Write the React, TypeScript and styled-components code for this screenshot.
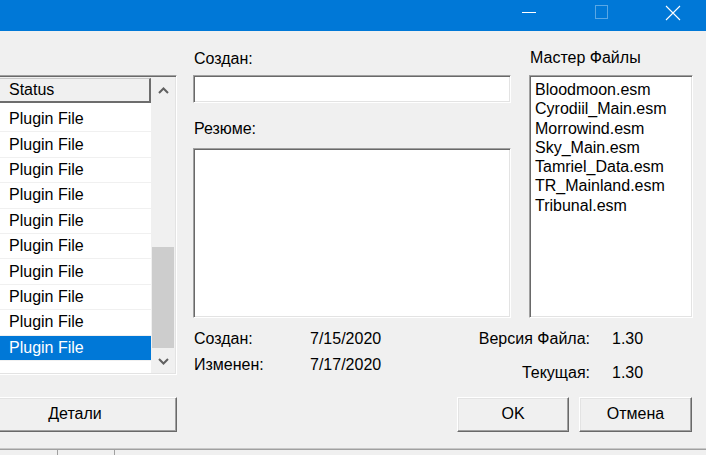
import React from "react";
import styled, { createGlobalStyle } from "styled-components";

const Global = createGlobalStyle`
  html, body { margin: 0; padding: 0; }
  body {
    width: 706px; height: 455px; overflow: hidden;
    background: #f0f0f0;
    font-family: "Liberation Sans", Arial, sans-serif;
    font-size: 16px; color: #000;
  }
`;

const Window = styled.div`
  width: 706px; height: 455px;
  display: flex; flex-direction: column;
  background: #f0f0f0; overflow: hidden;
`;

const TitleBar = styled.div`
  height: 31px; flex-shrink: 0;
  background: #0078d7;
  display: flex; justify-content: flex-end;
`;

const CaptionGroup = styled.div`
  display: flex; margin-right: -3px;
`;

const CaptionButton = styled.div<{ $dim?: boolean }>`
  width: 72px; display: flex; justify-content: center;
  padding-top: 5px; box-sizing: border-box;
  opacity: ${(p) => (p.$dim ? 0.35 : 1)};
`;

const Body = styled.div`
  flex: 1; display: flex;
`;

const LeftColumn = styled.div`
  width: 177px; flex-shrink: 0;
  display: flex; flex-direction: column;
  padding-top: 44px;
`;

const ListBox = styled.div`
  height: 300px; box-sizing: border-box;
  display: flex;
  border-top: 1px solid #a0a0a0;
  border-right: 1px solid #fff;
  border-bottom: 1px solid #fff;
  box-shadow: inset 0 1px #696969, inset -1px -1px #e3e3e3;
  padding: 2px 1px 1px 0;
`;

const ListContent = styled.div`
  flex: 1; display: flex; flex-direction: column;
  background: #fff; overflow: hidden;
`;

const HeaderCell = styled.div`
  height: 25px; box-sizing: border-box;
  background: #f0f0f0;
  border: 2px solid #6d6d6d;
  border-left: 0;
  border-top: 1px solid #c8c8c8;
  padding-left: 9px;
  display: flex; align-items: center;
  flex-shrink: 0;
`;

const Rows = styled.div`
  padding-top: 4px;
  display: flex; flex-direction: column;
`;

const Row = styled.div<{ $selected?: boolean }>`
  height: 25.4px; box-sizing: border-box;
  display: flex; align-items: center;
  padding-left: 9px;
  border-bottom: 1px solid #f0f0f0;
  background: ${(p) => (p.$selected ? "#0078d7" : "#fff")};
  color: ${(p) => (p.$selected ? "#fff" : "#000")};
  flex-shrink: 0;
`;

const ScrollBar = styled.div`
  width: 24px; background: #f0f0f0;
  display: flex; flex-direction: column;
`;

const ScrollArrow = styled.div`
  height: 24px; display: flex; align-items: center; justify-content: center;
  flex-shrink: 0;
`;

const ScrollTrack = styled.div`
  flex: 1; display: flex; flex-direction: column; justify-content: flex-end;
  padding: 0 1px 1px 1px;
`;

const Thumb = styled.div`
  height: 101px; background: #cdcdcd;
`;

const Button = styled.div<{ $w: number }>`
  width: ${(p) => p.$w}px; height: 35px; box-sizing: border-box;
  background: #f0f0f0;
  border-top: 1px solid #fff; border-left: 1px solid #fff;
  border-right: 1px solid #696969; border-bottom: 1px solid #696969;
  box-shadow: inset -1px -1px #a0a0a0, inset 1px 1px #e3e3e3;
  display: flex; align-items: center; justify-content: center;
  padding-bottom: 2px;
`;

const DetailsButton = styled(Button)`
  margin-top: 22px; margin-left: -27px;
`;

const MainArea = styled.div`
  width: 500px; margin-left: 16px;
  display: flex; flex-direction: column;
`;

const TopSection = styled.div`
  display: flex; gap: 18px;
`;

const MiddleCol = styled.div`
  width: 318px; display: flex; flex-direction: column;
  padding-top: 19px;
`;

const RightCol = styled.div`
  width: 164px; display: flex; flex-direction: column;
  padding-top: 18px;
`;

const Label = styled.div<{ $mt?: number; $mb?: number }>`
  height: 18px; line-height: 18px; padding-left: 1px;
  margin-top: ${(p) => p.$mt ?? 0}px;
  margin-bottom: ${(p) => p.$mb ?? 0}px;
`;

const Sunken = styled.div<{ $h: number }>`
  height: ${(p) => p.$h}px; box-sizing: border-box;
  background: #fff;
  border-top: 1px solid #a0a0a0; border-left: 1px solid #a0a0a0;
  border-right: 1px solid #fff; border-bottom: 1px solid #fff;
  box-shadow: inset 1px 1px #696969, inset -1px -1px #e3e3e3;
`;

const MasterList = styled(Sunken)`
  padding: 4px 5px;
  display: flex; flex-direction: column;
`;

const MasterItem = styled.div`
  line-height: 19.3px; height: 19.3px;
`;

const InfoSection = styled.div`
  display: flex; justify-content: space-between;
  margin-top: 12px; padding-left: 1px;
`;

const InfoGrid = styled.div<{ $cols: string; $rowGap: number; $right?: boolean }>`
  display: grid;
  grid-template-columns: ${(p) => p.$cols};
  row-gap: ${(p) => p.$rowGap}px;
  column-gap: 22px;
  line-height: 18px;
  align-content: start;
  & > *:nth-child(odd) { text-align: ${(p) => (p.$right ? "right" : "left")}; }
`;

const ButtonRow = styled.div`
  display: flex; justify-content: flex-end; gap: 10px;
  margin-top: 15px; padding-right: 1px;
`;

const StatusBar = styled.div`
  height: 6px; flex-shrink: 0;
  border-top: 1px solid #c8c8c8;
  box-shadow: inset 0 1px #a0a0a0;
  display: flex;
`;

const StatusPanel = styled.div<{ $w: number }>`
  width: ${(p) => p.$w}px; border-right: 1px solid #a0a0a0;
`;

const masters = [
  "Bloodmoon.esm",
  "Cyrodiil_Main.esm",
  "Morrowind.esm",
  "Sky_Main.esm",
  "Tamriel_Data.esm",
  "TR_Mainland.esm",
  "Tribunal.esm",
];

const Chevron = ({ up }: { up?: boolean }) => (
  <svg width="11" height="7" viewBox="0 0 11 7">
    <path
      d={up ? "M1 6 L5.5 1.5 L10 6" : "M1 1 L5.5 5.5 L10 1"}
      fill="none"
      stroke="#606060"
      strokeWidth="2"
    />
  </svg>
);

export default function App() {
  return (
    <Window>
      <Global />
      <TitleBar>
        <CaptionGroup>
          <CaptionButton>
            <svg width="15" height="15" viewBox="0 0 15 15">
              <path d="M0 7.5 H14" stroke="#fff" strokeWidth="1" />
            </svg>
          </CaptionButton>
          <CaptionButton $dim>
            <svg width="15" height="15" viewBox="0 0 15 15">
              <rect x="1.5" y="0.5" width="12" height="13" fill="none" stroke="#fff" strokeWidth="1" />
            </svg>
          </CaptionButton>
          <CaptionButton>
            <svg width="16" height="16" viewBox="0 0 16 16">
              <path d="M1 1 L15 15 M15 1 L1 15" stroke="#fff" strokeWidth="1.1" />
            </svg>
          </CaptionButton>
        </CaptionGroup>
      </TitleBar>
      <Body>
        <LeftColumn>
          <ListBox>
            <ListContent>
              <HeaderCell>Status</HeaderCell>
              <Rows>
                {Array.from({ length: 10 }).map((_, i) => (
                  <Row key={i} $selected={i === 9}>
                    Plugin File
                  </Row>
                ))}
              </Rows>
            </ListContent>
            <ScrollBar>
              <ScrollArrow>
                <Chevron up />
              </ScrollArrow>
              <ScrollTrack>
                <Thumb />
              </ScrollTrack>
              <ScrollArrow>
                <Chevron />
              </ScrollArrow>
            </ScrollBar>
          </ListBox>
          <DetailsButton $w={204}>Детали</DetailsButton>
        </LeftColumn>
        <MainArea>
          <TopSection>
            <MiddleCol>
              <Label $mb={7}>Создан:</Label>
              <Sunken $h={28} />
              <Label $mt={17} $mb={10}>Резюме:</Label>
              <Sunken $h={170} />
            </MiddleCol>
            <RightCol>
              <Label $mb={8}>Мастер Файлы</Label>
              <MasterList $h={243}>
                {masters.map((m) => (
                  <MasterItem key={m}>{m}</MasterItem>
                ))}
              </MasterList>
            </RightCol>
          </TopSection>
          <InfoSection>
            <InfoGrid $cols="94px auto" $rowGap={8}>
              <div>Создан:</div>
              <div>7/15/2020</div>
              <div>Изменен:</div>
              <div>7/17/2020</div>
            </InfoGrid>
            <InfoGrid $cols="auto 81px" $rowGap={16} $right>
              <div>Версия Файла:</div>
              <div>1.30</div>
              <div>Текущая:</div>
              <div>1.30</div>
            </InfoGrid>
          </InfoSection>
          <ButtonRow>
            <Button $w={112}>OK</Button>
            <Button $w={113}>Отмена</Button>
          </ButtonRow>
        </MainArea>
      </Body>
      <StatusBar>
        <StatusPanel $w={57} />
        <StatusPanel $w={56} />
      </StatusBar>
    </Window>
  );
}
